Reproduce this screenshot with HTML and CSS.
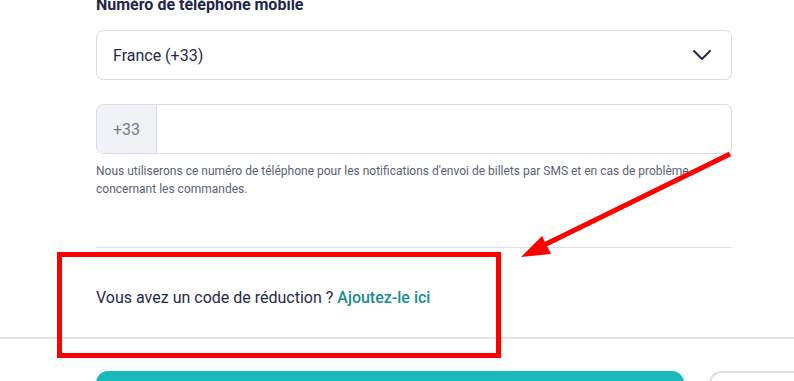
FILE: index.html
```html
<!DOCTYPE html>
<html lang="fr">
<head>
<meta charset="utf-8">
<link rel="stylesheet" href="styles.css">
</head>
<body>
<div class="page">
  <div class="form">
    <div class="label">Numéro de téléphone mobile</div>
    <div class="select">
      <span>France (+33)</span>
      <svg class="chev" width="18" height="10" viewBox="0 0 18 10"><path d="M1 1 L9 9 L17 1" fill="none" stroke="#232b4a" stroke-width="2" stroke-linecap="round" stroke-linejoin="round"/></svg>
    </div>
    <div class="phone">
      <div class="prefix">+33</div>
      <div class="field"></div>
    </div>
    <p class="help">Nous utiliserons ce numéro de téléphone pour les notifications d'envoi de billets par SMS et en cas de problème concernant les commandes.</p>
    <div class="divider"></div>
    <div class="promo">Vous avez un code de réduction ? <a class="link">Ajoutez-le ici</a></div>
  </div>
  <div class="fulldiv"></div>
  <div class="actions">
    <div class="btn-primary"></div>
    <div class="btn-secondary"></div>
  </div>
  <div class="annot-box"></div>
  <svg class="annot-arrow" width="794" height="381" viewBox="0 0 794 381">
    <line x1="730" y1="154" x2="540" y2="247" stroke="#ff0000" stroke-width="5"/>
    <polygon points="521,257 542,236 551,254" fill="#ff0000"/>
  </svg>
</div>
</body>
</html>
```
FILE: styles.css
```css
* { box-sizing: border-box; }
html, body { margin: 0; padding: 0; background: #fff; }
body { font-family: Roboto, "Liberation Sans", Arial, sans-serif; color: #1f2846; overflow: hidden; height: 381px; }
.page { position: relative; width: 794px; height: 381px; overflow: hidden; }
.form { padding: 0 62px 0 96px; }
.label { font-size: 16px; font-weight: 700; line-height: 20px; margin-top: -5px; color: #1d2749; }
.select {
  margin-top: 15px; height: 50px; border: 1px solid #d9dbe6; border-radius: 7px;
  display: flex; align-items: center; justify-content: space-between;
  padding: 0 20px 0 16px; font-size: 16px; color: #232b4a;
}
.chev { display: block; }
.phone {
  margin-top: 24px; height: 50px; border: 1px solid #d9dbe6; border-radius: 7px;
  display: flex; overflow: hidden;
}
.prefix {
  width: 60px; background: #f1f2f6; border-right: 1px solid #d9dbe6;
  display: flex; align-items: center; padding-left: 16px;
  font-size: 16px; color: #727a8f;
}
.field { flex: 1; }
.help { margin: 8px 0 0; font-size: 12px; line-height: 18px; color: #5a6178; }
.divider { margin-top: 49px; height: 1px; background: #dfe1ea; }
.promo { margin-top: 40px; font-size: 16px; line-height: 20px; color: #232b4a; }
.link { color: #178c92; font-weight: 500; }
.fulldiv { margin-top: 29px; height: 2px; background: #e1e3ec; }
.actions { display: flex; gap: 25px; padding-left: 96px; margin-top: 32px; }
.btn-primary { width: 588px; height: 40px; background: #1bb9bc; border-radius: 12px; }
.btn-secondary { flex: 1; height: 40px; border: 2px solid #dcdee7; border-radius: 12px; border-right: none; border-top-right-radius: 0; }
.annot-box { position: absolute; left: 57px; top: 252px; width: 444px; height: 106px; border: 5px solid #ff0000; }
.annot-arrow { position: absolute; left: 0; top: 0; pointer-events: none; }
```
